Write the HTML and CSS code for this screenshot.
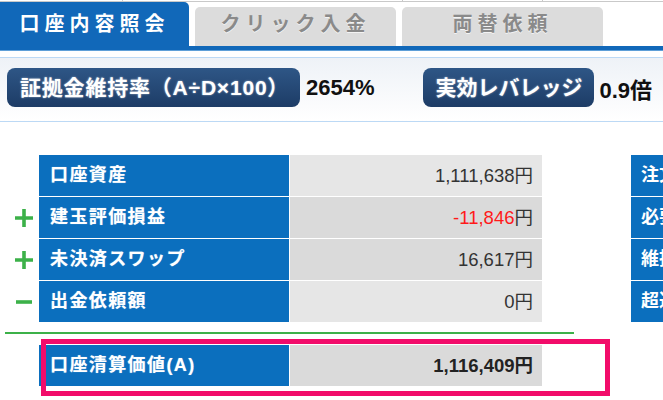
FILE: index.html
```html
<!DOCTYPE html>
<html lang="ja">
<head>
<meta charset="utf-8">
<title>口座内容照会</title>
<link rel="stylesheet" href="styles.css">
</head>
<body>
<div class="page">
  <div class="topline"><span class="seg s1"></span><span class="seg s2"></span><span class="seg s3"></span></div>
  <nav class="tabs">
    <div class="tab active">口座内容照会</div>
    <div class="tab">クリック入金</div>
    <div class="tab">両替依頼</div>
  </nav>
  <div class="tabbar"></div>
  <section class="summary">
    <span class="badge b1">証拠金維持率（A÷D×100）</span>
    <span class="sumval">2654%</span>
    <span class="badge b2">実効レバレッジ</span>
    <span class="sumval">0.9倍</span>
  </section>
  <div class="tables">
    <div class="left">
      <div class="row">
        <span class="sign"></span>
        <span class="label">口座資産</span>
        <span class="value">1,111,638円</span>
      </div>
      <div class="row">
        <span class="sign"><svg width="18" height="18" viewBox="0 0 18 18"><path d="M9 0v18M0 9h18" stroke="#3cb149" stroke-width="3.6"/></svg></span>
        <span class="label">建玉評価損益</span>
        <span class="value alt"><span class="neg">-11,846</span>円</span>
      </div>
      <div class="row">
        <span class="sign"><svg width="18" height="18" viewBox="0 0 18 18"><path d="M9 0v18M0 9h18" stroke="#3cb149" stroke-width="3.6"/></svg></span>
        <span class="label">未決済スワップ</span>
        <span class="value alt">16,617円</span>
      </div>
      <div class="row">
        <span class="sign"><svg width="18" height="18" viewBox="0 0 18 18"><path d="M1 9h16" stroke="#3cb149" stroke-width="3.6"/></svg></span>
        <span class="label">出金依頼額</span>
        <span class="value">0円</span>
      </div>
      <div class="greenline"></div>
      <div class="row total">
        <span class="sign"></span>
        <span class="label">口座清算価値(A)</span>
        <span class="value alt strong">1,116,409円</span>
        <span class="highlight"></span>
      </div>
    </div>
    <div class="right">
      <div class="rcell">注文証拠金</div>
      <div class="rcell">必要証拠金</div>
      <div class="rcell">維持証拠金</div>
      <div class="rcell">超過証拠金</div>
    </div>
  </div>
</div>
</body>
</html>
```
FILE: styles.css
```css
html, body {
  margin: 0;
  padding: 0;
  background: #fff;
}
body {
  width: 663px;
  height: 400px;
  overflow: hidden;
  font-family: "Liberation Sans", "Noto Sans CJK JP", sans-serif;
}
.page {
  width: 663px;
}
.topline {
  display: flex;
  height: 1px;
  border-bottom: 1px solid #c9c9c9;
}
.seg {
  display: block;
  height: 1px;
  border-right: 1px solid #c9c9c9;
}
.s1 { width: 122px; }
.s2 { width: 279px; }
.s3 { width: 139px; }

.tabs {
  display: flex;
  align-items: flex-end;
  gap: 6px;
  height: 44px;
}
.tab {
  width: 201px;
  height: 39px;
  box-sizing: border-box;
  padding-bottom: 5px;
  line-height: 34px;
  text-align: center;
  font-size: 20px;
  font-weight: bold;
  letter-spacing: 5px;
  color: #8a8a8a;
  background: #dcdcdc;
  border-radius: 5px 5px 0 0;
  text-shadow: 0 1px 0 #f4f4f4;
}
.tab.active {
  width: 189px;
  height: 44px;
  padding-bottom: 0;
  line-height: 44px;
  color: #fff;
  background: #1168b9;
  border-radius: 0 5px 0 0;
  text-shadow: none;
}
.tabbar {
  height: 4px;
  background: #1168b9;
  border-bottom: 1px solid #5e9fd8;
  margin-bottom: 6px;
}

.summary {
  display: flex;
  align-items: center;
  height: 63px;
  border-top: 1px solid #bcd9f5;
  border-bottom: 1px solid #bcd9f5;
  background: linear-gradient(#eef2f7, #ffffff);
}
.badge {
  display: inline-block;
  height: 39px;
  line-height: 39px;
  box-sizing: border-box;
  border-radius: 8px;
  background: linear-gradient(#2e5686, #1d3c66);
  color: #fff;
  font-size: 21px;
  font-weight: bold;
  text-shadow: 0 0 2px rgba(255,255,255,0.6);
  margin-top: -4px;
  white-space: nowrap;
}
.b1 {
  margin-left: 7px;
  width: 293px;
  padding-left: 13px;
  letter-spacing: 0.8px;
}
.b2 {
  margin-left: 48px;
  width: 171px;
  padding-left: 13px;
}
.sumval {
  margin-left: 6px;
  margin-top: -4px;
  font-size: 22px;
  font-weight: bold;
  color: #111;
}

.tables {
  display: flex;
  margin-top: 33px;
}
.left {
  width: 575px;
}
.row {
  position: relative;
  display: flex;
  height: 41px;
  margin-bottom: 1px;
}
.sign {
  width: 39px;
  display: flex;
  align-items: center;
  padding-left: 15px;
  box-sizing: border-box;
}
.label {
  width: 250px;
  background: #0b6fbe;
  color: #fff;
  font-size: 18px;
  font-weight: bold;
  line-height: 41px;
  padding-left: 11px;
  box-sizing: border-box;
  letter-spacing: 1.4px;
  text-shadow: 0 0 1px rgba(255,255,255,0.5);
}
.value {
  width: 252px;
  margin-left: 1px;
  background: #e6e6e6;
  color: #333;
  font-size: 18.5px;
  line-height: 41px;
  text-align: right;
  padding-right: 9px;
  box-sizing: border-box;
}
.value.alt {
  background: #dadada;
}
.value.strong {
  font-weight: bold;
  color: #222;
}
.neg {
  color: #ff1a1a;
}
.greenline {
  height: 2px;
  background: #3cb149;
  margin: 10px 0 11px 5px;
  width: 569px;
}
.highlight {
  position: absolute;
  left: 41px;
  top: -6px;
  width: 569px;
  height: 57px;
  box-sizing: border-box;
  border: 5px solid #f20c6a;
}
.right {
  margin-left: 57px;
}
.rcell {
  width: 140px;
  height: 41px;
  margin-bottom: 1px;
  background: #0b6fbe;
  color: #fff;
  font-size: 18px;
  font-weight: bold;
  line-height: 41px;
  padding-left: 10px;
  box-sizing: border-box;
  white-space: nowrap;
}
```
